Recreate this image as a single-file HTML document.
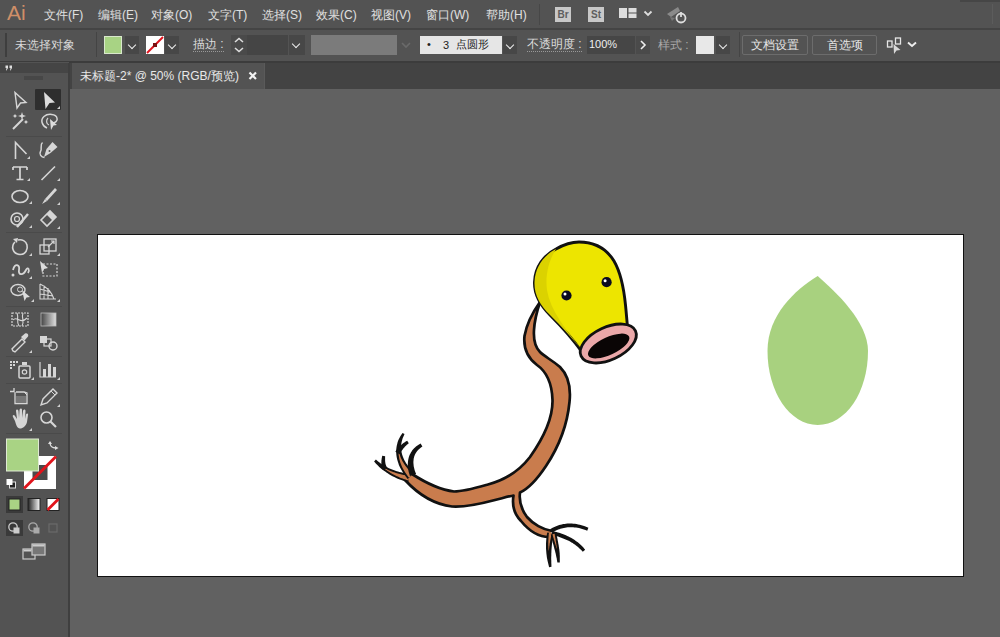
<!DOCTYPE html>
<html><head><meta charset="utf-8">
<style>
*{margin:0;padding:0;box-sizing:border-box}
svg{display:block}
html,body{width:1000px;height:637px;overflow:hidden;background:#5f5f5f;font-family:"Liberation Sans",sans-serif;}
.abs{position:absolute}
#menubar{left:0;top:0;width:1000px;height:28px;background:#535353}
#sep1{left:0;top:28px;width:1000px;height:2px;background:#444}
#ctrl{left:0;top:30px;width:1000px;height:31px;background:#535353}
#sep2{left:0;top:61px;width:1000px;height:2px;background:#3c3c3c}
#tool{left:0;top:62px;width:69px;height:575px;background:#535353}
#toolsep{left:69px;top:62px;width:2px;height:575px;background:#3b3b3b}
#tabbar{left:70px;top:63px;width:930px;height:26px;background:#434343}
#tab{left:72px;top:63px;width:193px;height:26px;background:#535353;border-right:1px solid #5a5a5a}
#canvas{left:70px;top:89px;width:930px;height:548px;background:#616161}
#artboard{left:97px;top:234px;width:867px;height:343px;background:#fff;border:1px solid #111}
.mt{position:absolute;top:7px;font-size:12px;color:#e0e0e0;white-space:nowrap}
.dd{width:14px;height:18px;background:#474747}
.dd:after{content:"";position:absolute;left:4px;top:6px;width:5px;height:5px;border-right:1.6px solid #eee;border-bottom:1.6px solid #eee;transform:rotate(45deg)}
.btn{top:35px;height:20px;border:1px solid #6c6c6c;border-radius:2px;font-size:12px;color:#e6e6e6;text-align:center;line-height:18px}
.t{position:absolute;font-size:11px;color:#ddd;white-space:nowrap}
</style></head><body>
<div id="menubar" class="abs"></div>
<div id="sep1" class="abs"></div>
<div id="ctrl" class="abs"></div>
<div id="sep2" class="abs"></div>
<div id="tool" class="abs"></div>
<div id="toolsep" class="abs"></div>
<div id="tabbar" class="abs"></div>
<div id="tab" class="abs"></div>
<div id="canvas" class="abs"></div>
<div id="artboard" class="abs"></div>


<!-- toolbar -->
<svg class="abs" style="left:0;top:0" width="70" height="637" viewBox="0 0 70 637">
<rect x="0" y="63" width="68" height="574" fill="#535353"/>
<rect x="0" y="63" width="68" height="10" fill="#454545"/>
<rect x="68" y="63" width="2" height="574" fill="#3f3f3f"/>
<path d="M5.5,65.5 L8,65.5 L8,68 L6.5,70.5 L6,70.5 L6.5,68 L5.5,68 Z M9.5,65.5 L12,65.5 L12,68 L10.5,70.5 L10,70.5 L10.5,68 L9.5,68 Z" fill="#e0e0e0"/>
<rect x="24" y="76" width="19" height="4" fill="#474747"/>
<rect x="6" y="136" width="56" height="1" fill="#4a4a4a"/>
<rect x="6" y="232" width="56" height="1" fill="#4a4a4a"/>
<rect x="6" y="306" width="56" height="1" fill="#4a4a4a"/>
<rect x="6" y="356" width="56" height="1" fill="#4a4a4a"/>
<rect x="6" y="383" width="56" height="1" fill="#4a4a4a"/>
<rect x="6" y="433" width="56" height="1" fill="#4a4a4a"/>
<path d="M15,92.5 L26,102.5 L20.5,103 L17,108 Z" fill="none" stroke="#d6d6d6" stroke-width="1.4" stroke-linejoin="miter"/>
<rect x="35" y="89" width="26" height="21" rx="1" fill="#2e2e2e"/>
<path d="M44,92 L55,102.5 L49.5,103 L45.5,109 Z" fill="#dcdcdc"/>
<path d="M57,109 L60,106 L60,109 Z" fill="#cfcfcf"/>
<path d="M13,129 L23,119" stroke="#d6d6d6" stroke-width="2"/>
<path d="M22,112 L23,115 L26,116 L23,117 L22,120 L21,117 L18,116 L21,115 Z M15,114 L16,115.5 L17.5,116 L16,116.5 L15,118 L14,116.5 L12.5,116 L14,115.5Z M26,120 L27,121.5 L28.5,122 L27,122.5 L26,124 L25,122.5 L23.5,122 L25,121.5Z" fill="#d6d6d6"/>
<path d="M47,128 C42,126 40,120 44,116.5 C48,113 56,114 57,118 C58,121 55,123 52,123" fill="none" stroke="#d6d6d6" stroke-width="1.5"/>
<path d="M48,118 C46,120 46,124 49,125" fill="none" stroke="#d6d6d6" stroke-width="1.2"/>
<path d="M50,119 L57,125 L53.5,125.5 L51,130 Z" fill="#dcdcdc"/>
<path d="M15.5,159 L15.5,142.5 L26.5,154" fill="none" stroke="#d6d6d6" stroke-width="1.6"/>
<path d="M27,159 L30,156 L30,159 Z" fill="#cfcfcf"/>
<path d="M44,157 L46.5,149 L52.5,142 L57.5,147 L50.5,153 Z" fill="#d6d6d6"/><circle cx="49.5" cy="151" r="1" fill="#535353"/>
<path d="M42.5,142.5 C39.5,145 42.5,148.5 40.5,151.5 C39,154 41,157.5 44.5,157.5" fill="none" stroke="#d6d6d6" stroke-width="1.5"/>
<path d="M13,167 L27,167 M20,167 L20,179.5 M16.5,179.5 L23.5,179.5 M13,167 L13,170 M27,167 L27,170" fill="none" stroke="#d6d6d6" stroke-width="1.7"/>
<path d="M27,181 L30,178 L30,181 Z" fill="#cfcfcf"/>
<path d="M41.5,180 L55,166.5" stroke="#d6d6d6" stroke-width="1.6"/>
<path d="M57,181 L60,178 L60,181 Z" fill="#cfcfcf"/>
<ellipse cx="20" cy="196.5" rx="8" ry="6" fill="none" stroke="#d6d6d6" stroke-width="1.6"/>
<path d="M29,204 L32,201 L32,204 Z" fill="#cfcfcf"/>
<path d="M42,204 L45,199 L47,201 Z" fill="#d6d6d6"/><path d="M45,199 L55,188 L57,190 L47,201" fill="#d6d6d6"/>
<path d="M57,205 L60,202 L60,205 Z" fill="#cfcfcf"/>
<circle cx="17" cy="219" r="6" fill="none" stroke="#d6d6d6" stroke-width="1.6"/><circle cx="17" cy="219" r="2.5" fill="none" stroke="#d6d6d6" stroke-width="1.2"/>
<path d="M17,227 L28,214" stroke="#d6d6d6" stroke-width="2.4"/>
<path d="M29,228 L32,225 L32,228 Z" fill="#cfcfcf"/>
<path d="M41,220 L50,211 L56,217 L47,226 Z" fill="none" stroke="#d6d6d6" stroke-width="1.6"/><path d="M50,211 L56,217 L52.5,220.5 L46.5,214.5 Z" fill="#d6d6d6"/>
<path d="M57,229 L60,226 L60,229 Z" fill="#cfcfcf"/>
<path d="M15,242 C11,246 12,254 20,254.5 C26,254.5 28,249 27,245 C26,241 22,239 18,240" fill="none" stroke="#d6d6d6" stroke-width="1.6"/><path d="M13,239 L18,238 L17,243 Z" fill="#d6d6d6"/>
<path d="M29,256 L32,253 L32,256 Z" fill="#cfcfcf"/>
<rect x="40" y="245" width="9" height="9" fill="none" stroke="#d6d6d6" stroke-width="1.3"/><rect x="44" y="239" width="12" height="12" fill="none" stroke="#d6d6d6" stroke-width="1.3"/><path d="M48,247 L54,241 M51,241 L54,241 L54,244" fill="none" stroke="#d6d6d6" stroke-width="1.2"/>
<path d="M57,256 L60,253 L60,256 Z" fill="#cfcfcf"/>
<path d="M13,270 C15,262 20,265 19,270 C18,275 23,276 26,270 C28,266 30,270 28,273" fill="none" stroke="#d6d6d6" stroke-width="1.8"/><circle cx="13" cy="275" r="1.5" fill="#d6d6d6"/>
<path d="M29,279 L32,276 L32,279 Z" fill="#cfcfcf"/>
<rect x="43" y="264" width="14" height="12" fill="none" stroke="#d6d6d6" stroke-width="1.2" stroke-dasharray="2 1.5"/><path d="M40,261 L48,268 L44,269 L42,273 Z" fill="#dcdcdc"/>
<ellipse cx="18" cy="290" rx="7" ry="5.5" fill="none" stroke="#d6d6d6" stroke-width="1.4"/><circle cx="20" cy="289.5" r="2.5" fill="none" stroke="#d6d6d6" stroke-width="1"/><path d="M22,290 L30,297 L26.5,297.5 L24.5,301 Z" fill="#dcdcdc"/>
<path d="M31,302 L34,299 L34,302 Z" fill="#cfcfcf"/>
<path d="M40,284 L40,299 L56,299 M40,284 C47,287 52,293 54,299 M40,289 L50,292 M40,294 L53,296 M44,285.5 L44,299 M48,288 L48,299" fill="none" stroke="#d6d6d6" stroke-width="1.1"/>
<path d="M57,302 L60,299 L60,302 Z" fill="#cfcfcf"/>
<rect x="12" y="313" width="16" height="13" fill="none" stroke="#d6d6d6" stroke-width="1.2" stroke-dasharray="2 1"/><path d="M13,320 C17,315 20,325 27,318 M17,313 C19,318 16,322 19,326 M23,313 C21,318 25,321 22,326" fill="none" stroke="#d6d6d6" stroke-width="1.1"/>
<defs><linearGradient id="gg" x1="0" x2="1"><stop offset="0" stop-color="#444"/><stop offset="1" stop-color="#e0e0e0"/></linearGradient><linearGradient id="gg2" x1="0" x2="1"><stop offset="0" stop-color="#222"/><stop offset="1" stop-color="#fff"/></linearGradient></defs>
<rect x="41" y="313" width="15" height="13" fill="url(#gg)" stroke="#bbb" stroke-width="0.8"/>
<path d="M13,351 L12,349 L22,339 L25,342 L15,352 Z" fill="none" stroke="#d6d6d6" stroke-width="1.4"/><path d="M21,337 L25,333.5 C27,332.5 29,334.5 28,336.5 L24.5,340.5 Z" fill="#d6d6d6"/>
<path d="M29,353 L32,350 L32,353 Z" fill="#cfcfcf"/>
<rect x="40" y="336" width="7" height="7" fill="#d6d6d6"/><rect x="44" y="339" width="7" height="7" fill="none" stroke="#d6d6d6" stroke-width="1.2"/><circle cx="53" cy="346" r="4" fill="none" stroke="#d6d6d6" stroke-width="1.4"/>
<rect x="19" y="366" width="11" height="12" rx="1" fill="none" stroke="#d6d6d6" stroke-width="1.5"/><circle cx="24.5" cy="372" r="2.2" fill="none" stroke="#d6d6d6" stroke-width="1.2"/><rect x="22" y="362" width="5" height="3" fill="#d6d6d6"/>
<rect x="10" y="361" width="2" height="2" fill="#d6d6d6"/>
<rect x="13" y="361" width="2" height="2" fill="#d6d6d6"/>
<rect x="10" y="364" width="2" height="2" fill="#d6d6d6"/>
<rect x="13" y="364" width="2" height="2" fill="#d6d6d6"/>
<rect x="16" y="361" width="2" height="2" fill="#d6d6d6"/>
<rect x="10" y="367" width="2" height="2" fill="#d6d6d6"/>
<path d="M31,380 L34,377 L34,380 Z" fill="#cfcfcf"/>
<path d="M40,362 L40,377 L56,377" fill="none" stroke="#d6d6d6" stroke-width="1.2"/><rect x="43" y="369" width="3" height="8" fill="#d6d6d6"/><rect x="48" y="364" width="3" height="13" fill="#d6d6d6"/><rect x="53" y="367" width="3" height="10" fill="#d6d6d6"/>
<path d="M57,380 L60,377 L60,380 Z" fill="#cfcfcf"/>
<path d="M14,388 L14,392 M10,391.5 L14,391.5 M15,392 L15,403.5 L27,403.5 L27,393 L24,392 L16,392" fill="none" stroke="#d6d6d6" stroke-width="1.3"/><path d="M24,392 L27,395" stroke="#d6d6d6" stroke-width="1"/>
<path d="M16,396 L26,396 L26,403 L16,403 Z" fill="#777"/>
<path d="M41,405 L43,399 L53,389 L57,393 L47,403 Z" fill="none" stroke="#d6d6d6" stroke-width="1.4"/><path d="M51,391 L55,395" stroke="#d6d6d6" stroke-width="1"/>
<path d="M57,407 L60,404 L60,407 Z" fill="#cfcfcf"/>
<path d="M15,421 L13,417 C12,415 14,414 15,416 L17,419 L16,411 C16,409 18,409 18.5,411 L19,418 L19.5,410 C20,408 22,408 22,410 L22,418 L23,411 C23.5,409 25.5,409 25.5,411 L25,419 L26,414.5 C26.5,413 28.5,413 28,415 L27,422 C26,426 23,428.5 20,428.5 C17,428.5 16,424 15,421 Z" fill="#d6d6d6"/>
<path d="M29,431 L32,428 L32,431 Z" fill="#cfcfcf"/>
<circle cx="46.5" cy="417.5" r="5.5" fill="none" stroke="#d6d6d6" stroke-width="1.6"/><path d="M50.5,421.5 L56,427" stroke="#d6d6d6" stroke-width="2.2"/>
<rect x="24" y="456" width="32" height="33" fill="#fff"/><rect x="32.5" y="465" width="15" height="15" fill="#4a4a4a"/>
<line x1="24" y1="488.5" x2="56" y2="456.5" stroke="#e1141b" stroke-width="2.8"/>
<rect x="6.5" y="439" width="32" height="32" fill="#a9d384" stroke="#dfe9d4" stroke-width="1"/>
<path d="M50,442.5 C50,446 52,448 56,448" fill="none" stroke="#ddd" stroke-width="1.3"/><path d="M48,444 L50,441 L52,444 Z M55,446 L58.5,448 L55,450Z" fill="#ddd"/>
<rect x="9.5" y="482" width="6" height="6" fill="#222" stroke="#ddd" stroke-width="1"/><rect x="6.5" y="479" width="6" height="6" fill="#fff"/>
<rect x="6" y="496" width="17" height="17" fill="#3a3a3a"/><rect x="9" y="499" width="11" height="11" fill="#a9d384" stroke="#222" stroke-width="1"/>
<rect x="28" y="498.5" width="12" height="12" fill="url(#gg2)" stroke="#222" stroke-width="1"/>
<rect x="47" y="498.5" width="12" height="12" fill="#fff" stroke="#222" stroke-width="1"/><line x1="47.5" y1="510" x2="58.5" y2="499" stroke="#e1141b" stroke-width="2.8"/>
<rect x="6" y="520" width="17" height="16" fill="#3a3a3a"/>
<circle cx="13" cy="527" r="4.2" fill="none" stroke="#ccc" stroke-width="1.3"/><rect x="13.5" y="527.5" width="6" height="6" fill="#ccc"/>
<circle cx="33" cy="527" r="4.2" fill="none" stroke="#aaa" stroke-width="1.3"/><rect x="33.5" y="527.5" width="6" height="6" fill="#aaa"/>
<rect x="49" y="524" width="8" height="8" fill="none" stroke="#6a6a6a" stroke-width="1.2"/>
<rect x="23" y="549" width="12" height="10" fill="none" stroke="#ccc" stroke-width="1.2"/><rect x="32" y="544" width="13" height="11" fill="#777" stroke="#ccc" stroke-width="1.2"/><rect x="23.5" y="549.5" width="8" height="2" fill="#ccc"/><rect x="32.5" y="544.5" width="12" height="2" fill="#ccc"/>
</svg>
<!-- /toolbar -->
<!-- artwork -->
<svg class="abs" style="left:0;top:0" width="1000" height="637" viewBox="0 0 1000 637">
<path d="M817.7,276 C795,290 767.5,315 767.5,351 C767.5,392 790,425 817.7,425 C846,425 868,392 868,351 C868,322 836,292 817.7,276 Z" fill="#a8d17f"/>
<path d="M540,302 C535,309 527,322 524.5,336 C523,351 529,359 537,365 C547,372 552,384 552.5,400 C553,420 542,440 530,457 C520,470 505,480 488,484.5 C474,488.5 464,491.5 454,491.5 C441,490 426,483 412,474 L405,480 C416,492 432,504 452,506.5 C466,507.5 480,504 495,500 C503,498 510,496 513.5,495.5 C512,505 513,513 521,521 C530,532 540,537 549,537 L552,531 C543,529.5 533,524 527,517 C521,509 519,500 520,492.5 C530,488 538,478 546,466 C558,448 567,428 569.5,402 C571,388 568,375 560,367 C552,360 545,357 540,352 C535,347 533.5,338 534,330 C534.5,320 537,311 540,302 Z" fill="#c97c4d"/>
<path d="M540,302 C535,309 527,322 524.5,336 C523,351 529,359 537,365 C547,372 552,384 552.5,400 C553,420 542,440 530,457 C520,470 505,480 488,484.5 C474,488.5 464,491.5 454,491.5 C441,490 426,483 412,474 M405,480 C416,492 432,504 452,506.5 C466,507.5 480,504 495,500 C503,498 510,496 513.5,495.5 C512,505 513,513 521,521 C530,532 540,537 549,537 M552,531 C543,529.5 533,524 527,517 C521,509 519,500 520,492.5 C530,488 538,478 546,466 C558,448 567,428 569.5,402 C571,388 568,375 560,367 C552,360 545,357 540,352 C535,347 533.5,338 534,330 C534.5,320 537,311 540,302" fill="none" stroke="#111" stroke-width="2.7" stroke-linejoin="round" stroke-linecap="round"/>
<path d="M409.7,473.8 L408.4,473.7 L407.2,473.5 L405.9,473.4 L404.6,473.2 L403.3,472.9 L402.0,472.6 L400.6,472.3 L399.3,472.0 L398.0,471.6 L396.7,471.2 L395.4,470.8 L394.1,470.3 L392.8,469.8 L391.5,469.3 L390.2,468.8 L388.9,468.2 L387.6,467.5 L386.4,466.9 L385.1,466.2 L383.9,465.5 L382.7,464.7 L381.5,464.0 L380.4,463.2 L379.2,462.3 L378.1,461.4 L377.0,460.5 L375.9,459.6 L374.1,461.4 L375.0,462.5 L376.0,463.7 L377.1,464.8 L378.1,465.8 L379.2,466.9 L380.4,467.9 L381.5,468.9 L382.7,469.8 L383.9,470.7 L385.2,471.6 L386.4,472.5 L387.7,473.3 L389.0,474.2 L390.3,474.9 L391.6,475.7 L393.0,476.4 L394.3,477.1 L395.7,477.7 L397.1,478.4 L398.5,479.0 L399.8,479.5 L401.3,480.0 L402.7,480.5 L404.1,481.0 L405.5,481.4 L406.9,481.8 L408.3,482.2 Z" fill="#111"/>
<path d="M409.4,475.6 L408.5,475.5 L407.5,475.4 L406.6,475.3 L405.6,475.2 L404.7,475.0 L403.7,474.9 L402.7,474.7 L401.7,474.5 L400.8,474.3 L399.8,474.0 L398.8,473.8 L397.8,473.5 L396.9,473.2 L395.9,472.9 L394.9,472.6 L393.9,472.3 L393.0,472.0 L392.0,471.6 L391.0,471.2 L390.1,470.8 L389.1,470.4 L388.1,470.0 L387.2,469.5 L386.3,469.0 L385.3,468.5 L384.4,468.0 L383.5,467.5 L383.3,467.8 L384.1,468.4 L385.0,469.1 L385.8,469.7 L386.7,470.3 L387.6,471.0 L388.5,471.5 L389.4,472.1 L390.3,472.7 L391.2,473.2 L392.1,473.8 L393.0,474.3 L394.0,474.8 L394.9,475.3 L395.9,475.7 L396.8,476.2 L397.8,476.6 L398.8,477.1 L399.7,477.5 L400.7,477.9 L401.7,478.2 L402.7,478.6 L403.7,479.0 L404.7,479.3 L405.6,479.6 L406.6,479.9 L407.6,480.2 L408.6,480.4 Z" fill="#c97c4d"/>
<path d="M387.3,467.9 L387.0,467.5 L386.8,467.2 L386.6,466.8 L386.5,466.4 L386.3,466.1 L386.1,465.7 L386.0,465.3 L385.9,464.9 L385.7,464.5 L385.6,464.2 L385.5,463.8 L385.4,463.3 L385.4,462.9 L385.3,462.5 L385.2,462.1 L385.2,461.6 L385.1,461.2 L385.1,460.7 L385.1,460.3 L385.1,459.8 L385.1,459.3 L385.1,458.8 L385.1,458.3 L385.1,457.8 L385.1,457.3 L385.1,456.8 L385.2,456.2 L382.2,455.8 L382.1,456.4 L382.0,456.9 L381.9,457.5 L381.8,458.0 L381.7,458.5 L381.6,459.1 L381.6,459.6 L381.5,460.1 L381.4,460.7 L381.4,461.2 L381.4,461.7 L381.4,462.2 L381.3,462.8 L381.3,463.3 L381.4,463.8 L381.4,464.3 L381.4,464.9 L381.5,465.4 L381.6,465.9 L381.7,466.4 L381.8,467.0 L381.9,467.5 L382.0,468.0 L382.2,468.5 L382.4,469.1 L382.6,469.6 L382.7,470.1 Z" fill="#111"/>
<path d="M414.3,473.0 L412.9,471.6 L411.6,470.2 L410.3,468.8 L409.2,467.4 L408.1,466.0 L407.1,464.6 L406.1,463.2 L405.3,461.8 L404.5,460.4 L403.8,459.0 L403.2,457.6 L402.7,456.2 L402.2,454.8 L401.8,453.3 L401.5,451.9 L401.3,450.5 L401.1,449.0 L401.1,447.6 L401.1,446.1 L401.2,444.6 L401.4,443.2 L401.7,441.7 L402.1,440.2 L402.5,438.7 L403.1,437.2 L403.8,435.7 L404.5,434.1 L402.5,432.9 L401.5,434.4 L400.5,435.9 L399.7,437.4 L398.9,439.0 L398.2,440.6 L397.6,442.2 L397.2,443.9 L396.8,445.6 L396.5,447.2 L396.3,449.0 L396.2,450.7 L396.2,452.4 L396.3,454.2 L396.5,456.0 L396.8,457.7 L397.2,459.5 L397.7,461.3 L398.3,463.1 L398.9,464.9 L399.7,466.7 L400.6,468.5 L401.6,470.2 L402.6,472.0 L403.7,473.8 L405.0,475.6 L406.3,477.3 L407.7,479.0 Z" fill="#111"/>
<path d="M413.0,474.2 L412.1,473.4 L411.3,472.6 L410.5,471.7 L409.7,470.9 L408.9,470.1 L408.2,469.3 L407.5,468.5 L406.8,467.6 L406.2,466.8 L405.5,466.0 L404.9,465.1 L404.3,464.3 L403.8,463.4 L403.3,462.6 L402.8,461.7 L402.3,460.9 L401.9,460.0 L401.4,459.1 L401.0,458.3 L400.7,457.4 L400.3,456.5 L400.0,455.6 L399.8,454.7 L399.5,453.8 L399.3,452.9 L399.1,452.0 L398.9,451.1 L398.6,451.1 L398.6,452.1 L398.6,453.0 L398.6,454.0 L398.7,454.9 L398.8,455.9 L399.0,456.8 L399.1,457.8 L399.3,458.8 L399.5,459.8 L399.8,460.8 L400.1,461.8 L400.4,462.8 L400.8,463.8 L401.2,464.8 L401.6,465.8 L402.0,466.8 L402.5,467.8 L403.0,468.8 L403.6,469.8 L404.1,470.8 L404.8,471.8 L405.4,472.8 L406.1,473.8 L406.8,474.8 L407.5,475.8 L408.2,476.8 L409.0,477.8 Z" fill="#c97c4d"/>
<path d="M399.6,454.3 L399.9,453.8 L400.2,453.2 L400.5,452.7 L400.8,452.2 L401.1,451.7 L401.4,451.2 L401.7,450.8 L402.0,450.3 L402.3,449.9 L402.7,449.4 L403.0,449.0 L403.3,448.6 L403.6,448.2 L404.0,447.8 L404.3,447.4 L404.7,447.0 L405.0,446.6 L405.4,446.2 L405.7,445.9 L406.1,445.5 L406.5,445.2 L406.8,444.8 L407.2,444.5 L407.6,444.2 L408.0,443.9 L408.4,443.6 L408.8,443.3 L407.2,440.7 L406.7,441.0 L406.2,441.3 L405.8,441.6 L405.3,441.8 L404.8,442.2 L404.3,442.5 L403.9,442.8 L403.4,443.1 L403.0,443.5 L402.5,443.8 L402.0,444.2 L401.6,444.6 L401.2,445.0 L400.7,445.4 L400.3,445.8 L399.8,446.2 L399.4,446.7 L399.0,447.1 L398.6,447.6 L398.2,448.0 L397.7,448.5 L397.3,449.0 L396.9,449.5 L396.5,450.1 L396.1,450.6 L395.7,451.2 L395.4,451.7 Z" fill="#111"/>
<path d="M416.1,473.9 L415.5,472.5 L415.0,471.2 L414.6,470.0 L414.3,468.7 L414.0,467.5 L413.7,466.3 L413.6,465.1 L413.5,464.0 L413.4,462.8 L413.4,461.7 L413.5,460.7 L413.6,459.6 L413.7,458.6 L414.0,457.5 L414.2,456.6 L414.6,455.6 L415.0,454.6 L415.4,453.7 L416.0,452.8 L416.5,451.9 L417.2,451.1 L417.9,450.3 L418.6,449.5 L419.5,448.7 L420.4,447.9 L421.3,447.2 L422.4,446.5 L420.6,443.5 L419.4,444.2 L418.2,444.9 L417.1,445.7 L416.0,446.5 L415.0,447.4 L414.1,448.3 L413.2,449.3 L412.3,450.3 L411.6,451.4 L410.9,452.5 L410.3,453.7 L409.7,454.8 L409.2,456.1 L408.8,457.3 L408.5,458.6 L408.2,460.0 L408.0,461.3 L407.9,462.7 L407.8,464.1 L407.9,465.6 L408.0,467.0 L408.1,468.5 L408.3,470.0 L408.6,471.5 L409.0,473.0 L409.5,474.6 L409.9,476.1 Z" fill="#111"/>
<path d="M552.0,532.7 L553.0,532.1 L554.0,531.6 L555.0,531.1 L556.0,530.5 L557.1,530.1 L558.2,529.6 L559.3,529.2 L560.4,528.8 L561.5,528.5 L562.7,528.2 L563.9,527.9 L565.1,527.7 L566.4,527.5 L567.7,527.3 L569.0,527.2 L570.3,527.2 L571.7,527.2 L573.1,527.3 L574.5,527.4 L576.0,527.6 L577.5,527.8 L579.0,528.1 L580.6,528.5 L582.2,528.9 L583.8,529.4 L585.5,530.0 L587.2,530.7 L588.4,527.7 L586.6,527.0 L584.9,526.3 L583.2,525.7 L581.5,525.2 L579.8,524.8 L578.2,524.4 L576.5,524.1 L574.9,523.8 L573.4,523.7 L571.8,523.6 L570.3,523.5 L568.8,523.5 L567.4,523.6 L566.0,523.7 L564.6,523.9 L563.2,524.1 L561.8,524.4 L560.5,524.7 L559.2,525.1 L558.0,525.5 L556.7,525.9 L555.5,526.4 L554.4,526.9 L553.2,527.5 L552.1,528.1 L551.0,528.7 L550.0,529.3 Z" fill="#111"/>
<path d="M551.6,535.0 L552.9,535.2 L554.2,535.5 L555.5,535.9 L556.8,536.2 L558.1,536.6 L559.3,537.0 L560.6,537.4 L561.9,537.9 L563.1,538.4 L564.4,538.9 L565.6,539.4 L566.8,539.9 L568.0,540.5 L569.2,541.1 L570.4,541.8 L571.5,542.4 L572.7,543.1 L573.8,543.9 L574.9,544.6 L576.0,545.4 L577.0,546.2 L578.0,547.1 L579.0,548.0 L580.0,548.9 L581.0,549.8 L581.9,550.8 L582.8,551.8 L585.2,549.8 L584.3,548.7 L583.4,547.6 L582.4,546.5 L581.4,545.5 L580.3,544.5 L579.2,543.5 L578.1,542.6 L577.0,541.7 L575.8,540.9 L574.7,540.1 L573.5,539.3 L572.2,538.6 L571.0,537.8 L569.8,537.2 L568.5,536.5 L567.2,535.9 L565.9,535.3 L564.6,534.7 L563.3,534.2 L561.9,533.7 L560.6,533.3 L559.2,532.8 L557.9,532.4 L556.5,532.0 L555.1,531.7 L553.8,531.3 L552.4,531.0 Z" fill="#111"/>
<path d="M547.3,532.4 L547.0,533.7 L546.8,535.1 L546.6,536.5 L546.4,537.8 L546.3,539.2 L546.2,540.5 L546.1,541.9 L546.0,543.2 L546.0,544.5 L546.0,545.8 L546.0,547.2 L546.0,548.5 L546.1,549.7 L546.2,551.0 L546.3,552.3 L546.4,553.6 L546.6,554.9 L546.7,556.1 L546.9,557.4 L547.1,558.6 L547.4,559.9 L547.6,561.1 L547.9,562.3 L548.2,563.5 L548.5,564.8 L548.8,566.0 L549.1,567.2 L551.5,566.8 L551.4,565.6 L551.4,564.3 L551.3,563.1 L551.3,561.9 L551.3,560.7 L551.2,559.5 L551.2,558.2 L551.2,557.0 L551.3,555.8 L551.3,554.6 L551.3,553.4 L551.4,552.2 L551.4,551.0 L551.5,549.8 L551.6,548.5 L551.7,547.3 L551.8,546.1 L551.9,544.9 L552.0,543.7 L552.2,542.4 L552.4,541.2 L552.5,540.0 L552.7,538.7 L552.9,537.5 L553.2,536.2 L553.4,534.9 L553.7,533.6 Z" fill="#111"/>
<path d="M549.0,532.7 L548.9,533.4 L548.8,534.1 L548.7,534.7 L548.7,535.4 L548.6,536.1 L548.6,536.8 L548.5,537.4 L548.5,538.1 L548.4,538.8 L548.4,539.4 L548.4,540.1 L548.3,540.8 L548.3,541.4 L548.3,542.1 L548.3,542.7 L548.3,543.4 L548.3,544.0 L548.3,544.7 L548.3,545.3 L548.4,545.9 L548.4,546.6 L548.4,547.2 L548.4,547.9 L548.5,548.5 L548.5,549.1 L548.6,549.7 L548.6,550.4 L548.9,550.4 L549.0,549.7 L549.0,549.1 L549.1,548.5 L549.2,547.9 L549.2,547.2 L549.3,546.6 L549.4,546.0 L549.5,545.4 L549.6,544.7 L549.6,544.1 L549.7,543.5 L549.8,542.9 L550.0,542.2 L550.1,541.6 L550.2,541.0 L550.3,540.3 L550.4,539.7 L550.6,539.1 L550.7,538.4 L550.8,537.8 L551.0,537.2 L551.2,536.5 L551.3,535.9 L551.5,535.2 L551.7,534.6 L551.8,534.0 L552.0,533.3 Z" fill="#c97c4d"/>
<path d="M550.8,534.6 L551.1,535.8 L551.3,537.0 L551.6,538.2 L551.9,539.3 L552.2,540.4 L552.5,541.4 L552.7,542.5 L553.0,543.5 L553.3,544.5 L553.6,545.5 L553.8,546.5 L554.1,547.5 L554.3,548.4 L554.6,549.4 L554.8,550.3 L555.1,551.3 L555.3,552.2 L555.6,553.2 L555.8,554.2 L556.0,555.2 L556.2,556.2 L556.4,557.2 L556.7,558.2 L556.8,559.3 L557.0,560.3 L557.2,561.4 L557.4,562.6 L559.8,562.4 L559.8,561.3 L559.8,560.1 L559.8,559.0 L559.8,557.9 L559.8,556.8 L559.8,555.7 L559.7,554.7 L559.7,553.6 L559.6,552.6 L559.5,551.5 L559.4,550.5 L559.3,549.5 L559.1,548.5 L559.0,547.5 L558.8,546.5 L558.7,545.4 L558.5,544.4 L558.3,543.4 L558.1,542.3 L557.9,541.3 L557.7,540.2 L557.5,539.1 L557.3,538.0 L557.0,536.9 L556.8,535.8 L556.5,534.6 L556.2,533.4 Z" fill="#111"/>
<path d="M552.4,534.2 L552.6,534.8 L552.8,535.4 L552.9,536.0 L553.1,536.6 L553.3,537.2 L553.4,537.7 L553.6,538.3 L553.8,538.8 L553.9,539.4 L554.1,539.9 L554.3,540.4 L554.4,541.0 L554.6,541.5 L554.7,542.0 L554.9,542.5 L555.0,543.0 L555.2,543.5 L555.3,544.0 L555.5,544.5 L555.6,545.0 L555.8,545.5 L555.9,546.0 L556.1,546.5 L556.2,547.0 L556.3,547.5 L556.5,548.0 L556.6,548.5 L556.9,548.4 L556.8,547.9 L556.8,547.4 L556.7,546.9 L556.6,546.4 L556.6,545.9 L556.5,545.4 L556.4,544.9 L556.3,544.4 L556.3,543.8 L556.2,543.3 L556.1,542.8 L556.0,542.3 L555.9,541.7 L555.8,541.2 L555.7,540.7 L555.7,540.1 L555.6,539.6 L555.5,539.0 L555.4,538.5 L555.3,537.9 L555.2,537.3 L555.1,536.7 L555.0,536.2 L554.9,535.6 L554.8,535.0 L554.7,534.4 L554.6,533.8 Z" fill="#c97c4d"/>
<path d="M579,242 C593,242 606,248 614,261 C621,273 624,290 625.5,305 C626.5,315 627,322 627.5,327 L582,352 C572,338 562,327 550,315 C540,305 534,295 534.5,282 C535,267 544,255 556,249 C563,245 571,242 579,242 Z" fill="#ede500" stroke="#111" stroke-width="2.9" stroke-linejoin="round"/>
<path d="M556,249 C549,260 545,275 547,290 C550,310 566,330 582,350 C572,338 562,327 550,315 C540,305 534,295 534.5,282 C535,267 544,255 556,249 Z" fill="#dbd200"/>
<circle cx="566.5" cy="295.5" r="5.1" fill="#0a0a20"/><circle cx="565" cy="294" r="1.5" fill="#fff"/>
<circle cx="606.6" cy="282.2" r="5.1" fill="#0a0a20"/><circle cx="605.1" cy="280.7" r="1.5" fill="#fff"/>
<ellipse cx="608.3" cy="343.5" rx="30" ry="16.3" transform="rotate(-25 608.3 343.5)" fill="#eba8a9" stroke="#111" stroke-width="2.8"/>
<ellipse cx="608.7" cy="346" rx="22.5" ry="8.8" transform="rotate(-25 608.7 346)" fill="#0a0505"/>
</svg>
<!-- menu -->
<div class="abs" style="left:7px;top:1px;font-size:21px;line-height:24px;color:#cf8f68">Ai</div>
<div class="mt" style="left:44px">文件(F)</div>
<div class="mt" style="left:98px">编辑(E)</div>
<div class="mt" style="left:151px">对象(O)</div>
<div class="mt" style="left:208px">文字(T)</div>
<div class="mt" style="left:262px">选择(S)</div>
<div class="mt" style="left:316px">效果(C)</div>
<div class="mt" style="left:371px">视图(V)</div>
<div class="mt" style="left:426px">窗口(W)</div>
<div class="mt" style="left:486px">帮助(H)</div>



<!-- menu icons -->
<div class="abs" style="left:539px;top:4px;width:1px;height:21px;background:#474747"></div>
<div class="abs" style="left:555px;top:7px;width:16px;height:15px;background:#c8c8c8;color:#5e5e5e;font-size:10px;font-weight:bold;line-height:15px;text-align:center">Br</div>
<div class="abs" style="left:588px;top:7px;width:16px;height:15px;background:#c8c8c8;color:#5e5e5e;font-size:10px;font-weight:bold;line-height:15px;text-align:center">St</div>
<div class="abs" style="left:619px;top:8px"><svg width="18" height="11"><rect x="0" y="0" width="8" height="10" fill="#ddd"/><rect x="9.5" y="0" width="8" height="4.5" fill="#ddd"/><rect x="9.5" y="5.5" width="8" height="4.5" fill="#ddd"/></svg></div>
<div class="abs" style="left:643px;top:10px"><svg width="10" height="7"><path d="M1.5 1.5 L5 5 L8.5 1.5" stroke="#ddd" stroke-width="1.8" fill="none"/></svg></div>
<div class="abs" style="left:666px;top:5px"><svg width="22" height="20"><path d="M1 9 L12 2 L14 6 L5 12 Z" fill="#8a8a8a"/><path d="M4 12 L6 16 L9 13" fill="#777"/><circle cx="15" cy="13" r="4.5" stroke="#ddd" stroke-width="1.8" fill="#535353"/><line x1="15" y1="7" x2="15" y2="12" stroke="#ddd" stroke-width="1.8"/></svg></div>
<div class="abs" style="left:960px;top:0px;width:40px;height:2px;background:#464646"></div>
<div class="abs" style="left:992px;top:4px;width:1px;height:20px;background:#5c5c5c"></div>

<!-- control bar -->
<div class="abs" style="left:5px;top:33px;width:2px;height:24px;background:#3e3e3e"></div>
<div class="t" style="left:15px;top:37px;font-size:12px;color:#d8d8d8">未选择对象</div>
<div class="abs" style="left:96px;top:32px;width:1px;height:25px;background:#444"></div>
<div class="abs" style="left:104px;top:36px;width:18px;height:18px;background:#a8d384;border:1px solid #d9e8cc"></div>
<div class="abs dd" style="left:125px;top:36px"></div>
<div class="abs" style="left:146px;top:36px;width:18px;height:18px;background:#fff;overflow:hidden"><svg width="18" height="18"><line x1="1" y1="17" x2="17" y2="1" stroke="#e0141e" stroke-width="2"/><rect x="7" y="7" width="4" height="4" fill="#7a1010"/></svg></div>
<div class="abs dd" style="left:165px;top:36px"></div>
<div class="t" style="left:193px;top:37px;font-size:12px;color:#dcdcdc;border-bottom:1px dotted #999;line-height:14px">描边 :</div>
<div class="abs" style="left:231px;top:35px;width:16px;height:20px;background:#4a4a4a"><svg width="16" height="20"><path d="M4 7 L8 3.5 L12 7 M4 13 L8 16.5 L12 13" stroke="#ddd" stroke-width="1.6" fill="none"/></svg></div>
<div class="abs" style="left:247px;top:35px;width:41px;height:20px;background:#454545"></div>
<div class="abs dd" style="left:289px;top:35px;height:20px;width:16px"></div>
<div class="abs" style="left:311px;top:35px;width:86px;height:20px;background:#7b7b7b"></div>
<div class="abs" style="left:399px;top:35px;width:16px;height:20px"><svg width="16" height="20"><path d="M3 8 L7 12 L11 8" stroke="#6a6a6a" stroke-width="1.6" fill="none"/></svg></div>
<div class="abs" style="left:420px;top:36px;width:82px;height:18px;background:#e6e6e6"></div>
<div class="t" style="left:427px;top:38px;font-size:11px;color:#222">•</div><div class="t" style="left:443px;top:39px;font-size:11px;color:#222">3</div><div class="t" style="left:456px;top:37px;font-size:11px;color:#222">点圆形</div>
<div class="abs dd" style="left:503px;top:36px"></div>
<div class="t" style="left:527px;top:37px;font-size:12px;color:#dcdcdc;border-bottom:1px dotted #999;line-height:14px">不透明度 :</div>
<div class="abs" style="left:587px;top:36px;width:48px;height:18px;background:#464646"></div>
<div class="t" style="left:589px;top:38px;font-size:11px;color:#eee">100%</div>
<div class="abs" style="left:636px;top:36px;width:14px;height:18px;background:#4a4a4a"><svg width="14" height="18"><path d="M5 5 L9 9 L5 13" stroke="#eee" stroke-width="1.6" fill="none"/></svg></div>
<div class="t" style="left:658px;top:37px;font-size:12px;color:#a9a9a9">样式 :</div>
<div class="abs" style="left:696px;top:36px;width:18px;height:18px;background:#e8e8e8"></div>
<div class="abs dd" style="left:716px;top:36px"></div>
<div class="abs" style="left:739px;top:32px;width:1px;height:25px;background:#454545"></div>
<div class="abs btn" style="left:742px;width:66px">文档设置</div>
<div class="abs btn" style="left:812px;width:65px">首选项</div>
<div class="abs" style="left:880px;top:30px"><svg width="30" height="26"><rect x="7.5" y="11" width="4.5" height="6" fill="none" stroke="#e6e6e6" stroke-width="1.3"/><rect x="15.5" y="8" width="5" height="6" fill="none" stroke="#e6e6e6" stroke-width="1.3"/><path d="M13.5,14 L20.5,20 L16.5,20.5 L14,24 Z" fill="#d8d8d8"/></svg></div>
<div class="abs" style="left:906px;top:41px"><svg width="12" height="7"><path d="M2 1.5 L6 5 L10 1.5" stroke="#eee" stroke-width="1.9" fill="none"/></svg></div>

<!-- tab -->
<div class="t" style="left:80px;top:68px;font-size:12px;color:#e8e8e8">未标题-2* @ 50% (RGB/预览)</div>
<svg class="abs" style="left:248px;top:71px" width="10" height="10"><path d="M1.5,1.5 L8,8 M8,1.5 L1.5,8" stroke="#f2f2f2" stroke-width="2.2"/></svg>

</body></html>
